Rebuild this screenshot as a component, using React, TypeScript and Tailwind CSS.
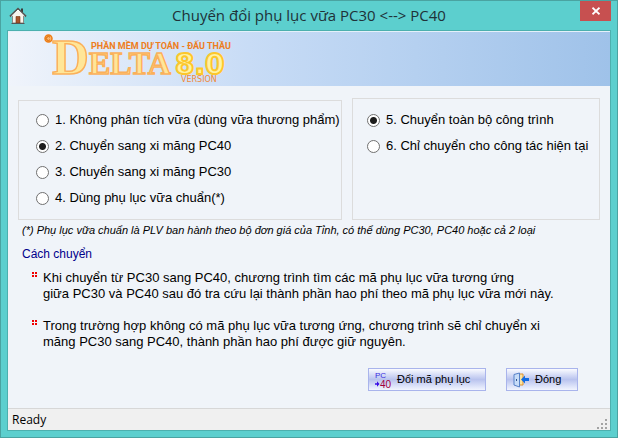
import { useState } from "react";

const mortarOptions = [
    "1. Không phân tích vữa (dùng vữa thương phẩm)",
    "2. Chuyển sang xi măng PC40",
    "3. Chuyển sang xi măng PC30",
    "4. Dùng phụ lục vữa chuẩn(*)",
];

const scopeOptions = [
    "5. Chuyển toàn bộ công trình",
    "6. Chỉ chuyển cho công tác hiện tại",
];

const notes = [
    [
        "Khi chuyển từ PC30 sang PC40, chương trình tìm các mã phụ lục vữa tương ứng",
        "giữa PC30 và PC40 sau đó tra cứu lại thành phần hao phí theo mã phụ lục vữa mới này.",
    ],
    [
        "Trong trường hợp không có mã phụ lục vữa tương ứng, chương trình sẽ chỉ chuyển xi",
        "măng PC30 sang PC40, thành phần hao phí được giữ nguyên.",
    ],
];

export default function App() {
    const [mortar, setMortar] = useState(1);
    const [scope, setScope] = useState(0);

    return (
        <div className="flex min-h-screen flex-col border border-[#4aa3a1] bg-[#5ccfce] px-1.5 pb-1.5 font-['Liberation_Sans',Arial,sans-serif] text-[13px] text-black">
            <TitleBar />
            <div className="flex flex-1 flex-col border border-[#4cb0ae] bg-[#f0f4f9]">
                <div className="h-[55px] border-t border-[#e4f1fa] bg-linear-to-r from-[#f0f4fb] via-[#c8dcf6] via-40% to-[#9fc2e9]">
                    <Logo />
                </div>
                <main className="flex flex-1 flex-col pt-3 pb-[17px]">
                    <div className="flex items-stretch gap-2.5 px-2.5">
                        <RadioGroup name="mortar" label="Loại vữa" options={mortarOptions} value={mortar} onChange={setMortar} className="mt-0.5 w-[324px] pt-1.5 pb-2 pl-[17px]" />
                        <RadioGroup name="scope" label="Phạm vi" options={scopeOptions} value={scope} onChange={setScope} className="flex-1 pt-2 pb-2 pl-3.5" />
                    </div>
                    <p className="pl-3.5 text-[11px] leading-5 italic">
                        (*) Phụ lục vữa chuẩn là PLV ban hành theo bộ đơn giá của Tỉnh, có thể dùng PC30, PC40 hoặc cả 2 loại
                    </p>
                    <h2 className="pt-1 pl-3.5 text-xs leading-5 text-[#00008b]">Cách chuyển</h2>
                    <ul className="flex flex-col gap-4 pt-1.5 pl-6">
                        {notes.map((lines, idx) => (
                            <li key={idx} className="flex gap-1.5 leading-4 whitespace-nowrap">
                                <Bullet />
                                <p>{lines[0]}<br />{lines[1]}</p>
                            </li>
                        ))}
                    </ul>
                    <div className="mt-auto flex justify-end gap-5 pr-8">
                        <ToolButton text="Đổi mã phụ lục" icon={<Pc40Icon />} className="w-[118px]" />
                        <ToolButton text="Đóng" icon={<DoorIcon />} className="w-[72px]" />
                    </div>
                </main>
                <footer className="flex h-[22px] items-center justify-between border-t border-[#d7d7d7] bg-[#f0f0f0] pr-0.5 pl-1 font-['Open_Sans','Noto_Sans',sans-serif] text-xs">
                    <span>Ready</span>
                    <SizeGrip />
                </footer>
            </div>
        </div>
    );
}

function TitleBar() {
    return (
        <header className="relative flex h-[29px] items-center justify-center">
            <HomeIcon />
            <h1 className="font-['Open_Sans','Noto_Sans',sans-serif] text-[15px] text-[#203238]">Chuyển đổi phụ lục vữa PC30 &lt;--&gt; PC40</h1>
            <button type="button" aria-label="Đóng cửa sổ" className="absolute top-0 right-0 flex h-5 w-[31px] items-center justify-center bg-[#c75050]">
                <svg width="8" height="8" viewBox="0 0 8 8" stroke="white" strokeWidth="1.8">
                    <path d="M0.5 0.7 7.5 7.3M7.5 0.7 0.5 7.3" />
                </svg>
            </button>
        </header>
    );
}

type RadioGroupProps = {
    name: string;
    label: string;
    options: string[];
    value: number;
    onChange: (idx: number) => void;
    className: string;
};

function RadioGroup({ name, label, options, value, onChange, className }: RadioGroupProps) {
    return (
        <div role="radiogroup" aria-label={label} className={`flex flex-col border border-[#dcdcdc] ${className}`}>
            {options.map((text, idx) => (
                <label key={idx} className="flex h-[26px] items-center gap-1.5 whitespace-nowrap">
                    <input
                        type="radio"
                        name={name}
                        checked={value === idx}
                        onChange={() => onChange(idx)}
                        className="h-[13px] w-[13px] shrink-0 appearance-none rounded-full border border-[#707070] bg-white checked:bg-[radial-gradient(circle,#1c1c1c_3px,white_4px)]"
                    />
                    {text}
                </label>
            ))}
        </div>
    );
}

function ToolButton({ text, icon, className }: { text: string; icon: React.ReactNode; className: string }) {
    return (
        <button type="button" className={`flex h-[23px] items-center gap-1.5 border border-[#a9b4ec] bg-linear-to-b from-[#fafbff] via-[#b9c3ee] to-[#f2f5ff] px-1.5 text-[11px] whitespace-nowrap ${className}`}>
            {icon}
            {text}
        </button>
    );
}

function Logo() {
    return (
        <svg width="224" height="54" viewBox="8 31 224 54" className="block" role="img" aria-label="Delta 8.0">
            <circle cx="48.500" cy="37.500" r="3.500" fill="#f9b36b" stroke="#ee7d14" strokeWidth="1.500" />
            <path d="M50 36.300a2 2 0 1 0 0 2.400" fill="none" stroke="#d86600" />
            <g fontFamily="Liberation Serif, serif" fontWeight="bold" fill="#ffe698" stroke="#fbb05a" strokeWidth="1.500">
                <text x="52" y="73" fontSize="51">D</text>
                <text x="89" y="73" fontSize="32">ELTA</text>
            </g>
            <text x="175" y="73" fontFamily="DejaVu Sans, sans-serif" fontWeight="bold" fontSize="28" fill="#fff3a4" stroke="#fcc72c" strokeWidth="2">8.0</text>
            <text x="91" y="48" fontFamily="Roboto, sans-serif" fontWeight="bold" fontSize="9" fill="#ee7d20">PHẦN MỀM DỰ TOÁN - ĐẤU THẦU</text>
            <text x="181" y="81" fontFamily="DejaVu Sans, sans-serif" fontSize="8" fill="#f08a3a">VERSION</text>
        </svg>
    );
}

function HomeIcon() {
    return (
        <svg width="18" height="18" viewBox="0 0 18 18" className="absolute top-1.5 left-0.5">
            <path d="M12 1.500h2v4h-2z" fill="#3b3b3b" />
            <path d="M3.500 8v8h11V8L9 3z" fill="#f8f5ee" stroke="#8a8a84" />
            <path d="M1 9.500 9 1.800l8 7.700" fill="none" stroke="#555350" strokeWidth="1.800" />
            <path d="M2.500 9.200 9 3l6.500 6.200" fill="none" stroke="#fff" />
            <path d="M7 9.500h4V16H7z" fill="#a9542c" stroke="#703512" strokeWidth="0.600" />
            <path d="M2.500 16.500h13" stroke="#555" />
        </svg>
    );
}

function Bullet() {
    return (
        <svg width="5" height="5" viewBox="0 0 5 5" fill="#f00000" className="mt-0.5 shrink-0" shapeRendering="crispEdges">
            <path d="M0 0h2v2H0zM3 0h2v2H3zM0 3h2v2H0zM3 3h2v2H3z" />
        </svg>
    );
}

function Pc40Icon() {
    return (
        <svg width="16" height="18" viewBox="0 0 16 18" className="shrink-0" fontFamily="Liberation Sans, sans-serif">
            <text x="0" y="7" fontSize="8" fill="#3a2de0">PC</text>
            <text x="5" y="17" fontSize="10" fill="#a3003c">40</text>
            <path d="M0 12.200h2v-2L4.500 13 2 15.800v-2H0z" fill="#3a0be6" />
        </svg>
    );
}

function DoorIcon() {
    return (
        <svg width="16" height="16" viewBox="0 0 16 16" className="shrink-0">
            <path d="M5 2h5v11H5z" fill="#fbe3a0" stroke="#dc9230" />
            <path d="M1 2.500 6.500 1v14L1 13z" fill="#c7dcf8" stroke="#5781c8" />
            <path d="M3.500 7v2" stroke="#31548f" />
            <path d="M8 7.500 12 3.500v2.500h4v3h-4v2.500z" fill="#116be4" />
        </svg>
    );
}

function SizeGrip() {
    return (
        <svg width="11" height="11" viewBox="0 0 11 11" fill="#a3a3a3" className="self-end" shapeRendering="crispEdges">
            <path d="M8 0h2v2H8zM4 4h2v2H4zM8 4h2v2H8zM0 8h2v2H0zM4 8h2v2H4zM8 8h2v2H8z" />
        </svg>
    );
}
